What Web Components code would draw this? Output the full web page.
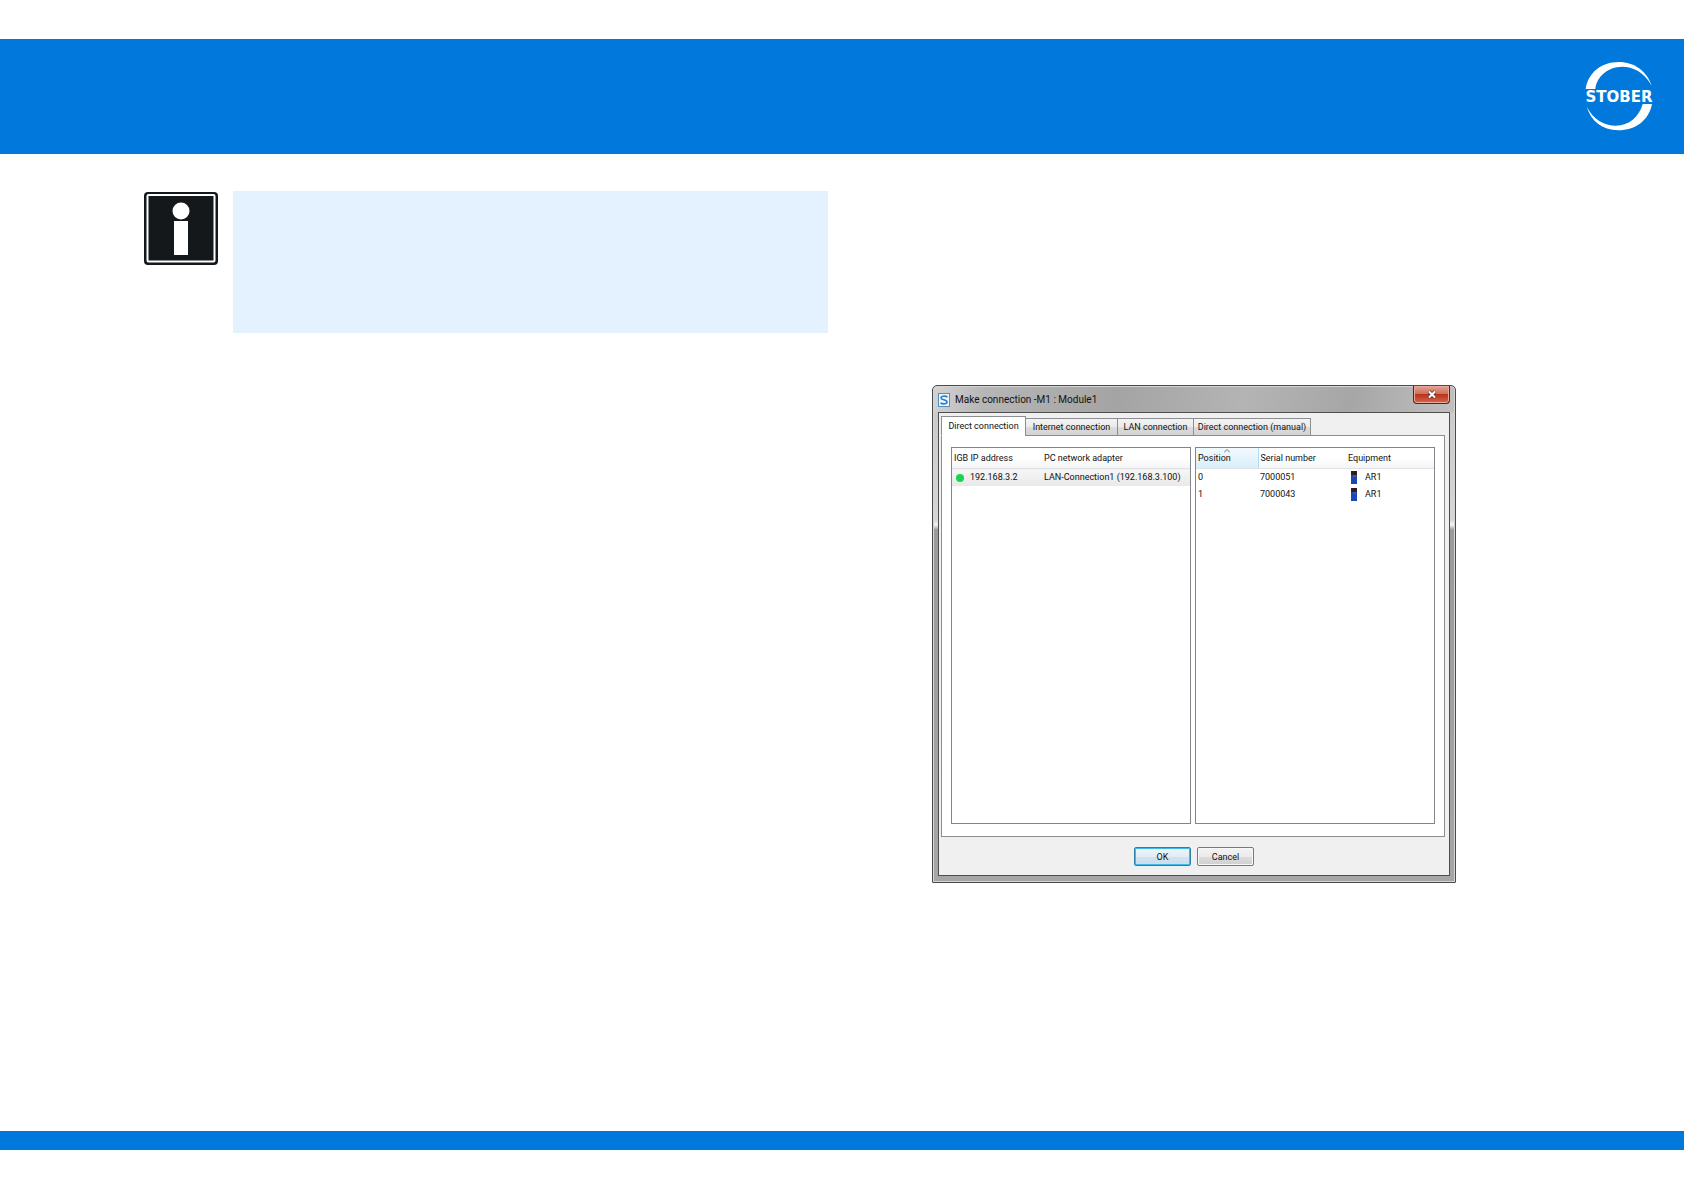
<!DOCTYPE html>
<html lang="en">
<head>
<meta charset="utf-8">
<title>Make connection</title>
<style>
body{margin:0;background:#fff;font-family:Roboto,"Liberation Sans",sans-serif}
</style>
</head>
<body>
<manual-page>
  <info-note slot="left"></info-note>
  <connection-dialog slot="right"></connection-dialog>
</manual-page>
<script>
const define=(name,html,init)=>customElements.define(name,class extends HTMLElement{
  constructor(){super();this.attachShadow({mode:'open'}).innerHTML=html;if(init)init.call(this,this.shadowRoot);}
});

define('brand-logo',`
<style>:host{display:block;width:72px;height:72px}svg{display:block}</style>
<svg width="72" height="72" viewBox="0 0 72 72" role="img" aria-label="STOBER">
  <path fill="#fff" d="M2.700 28C5 12 18 1 36 1C51 1 64 10 68.700 24.700C61 11 50 5.700 39 5.700C25 6 14 15 12.300 28Z"/>
  <path fill="#fff" d="M69 43C66 59 53 69.300 35 69.300C19 69 8 60 3.700 45.700C10 58 21 64.800 33 64.800C46 64.500 56 56 59.700 43Z"/>
  <text x="36" y="41" text-anchor="middle" font-family="DejaVu Sans" font-weight="700" font-size="15" fill="#fff">STOBER</text>
</svg>`);

define('info-note',`
<style>
:host{display:flex;gap:15px;align-items:flex-start}
svg{display:block;flex:none;margin-top:1px}
.box{flex:1;height:142px;background:#e4f1ff}
</style>
<svg width="74" height="74" viewBox="0 0 74 74" role="img" aria-label="Information">
  <rect width="74" height="73" rx="4" fill="#15181a"/>
  <rect x="3.500" y="3" width="67" height="66.500" rx="1" fill="none" stroke="#fff" stroke-width="2"/>
  <circle cx="37" cy="19" r="8.500" fill="#fff"/>
  <rect x="30" y="29" width="14" height="34" fill="#fff"/>
</svg>
<div class="box"></div>`);

define('title-bar',`
<style>
:host{display:flex;height:26px;align-items:flex-start;color:#111;font-size:10px}
svg{display:block}
.icon{margin:7px 5px 0 0}
.title{flex:1;line-height:28px;white-space:nowrap}
button{width:37px;height:18px;margin:0;padding:0;display:grid;place-items:center;border:1px solid #5c2019;border-top:0;border-radius:0 0 4px 4px;
background:linear-gradient(#e3a397,#d1705c 45%,#b8341c 50%,#d4674a);box-shadow:inset 0 0 0 1px #e9a99b}
</style>
<svg class="icon" width="12" height="14" viewBox="0 0 12 14"><rect x=".5" y=".5" width="11" height="13" fill="#eef6fc" stroke="#4d8fc4"/><path d="M9.500 4C7 2.500 3 3 3 5C3 7 9 6.500 9 9C9 11 5 11.500 2.500 10" fill="none" stroke="#2c7fc4" stroke-width="1.600"/></svg>
<span class="title"><slot></slot></span>
<button type="button" aria-label="Close"><svg width="10" height="9" viewBox="0 0 10 9"><path d="M2 1.500L8 7.500M8 1.500L2 7.500" stroke="#5b3430" stroke-width="3.600"/><path d="M2 1.500L8 7.500M8 1.500L2 7.500" stroke="#fff" stroke-width="2"/></svg></button>`);

define('tab-strip',`
<style>
:host{display:flex;align-items:flex-end;height:20px;position:relative;z-index:1;margin-bottom:-1px}
button{font:inherit;font-size:9px;color:#111;height:18px;margin:0 0 0 -1px;padding:0;border:1px solid #8b8d91;background:linear-gradient(#f3f3f3,#ebebeb 50%,#dcdcdc 51%,#d3d3d3);white-space:nowrap}
button[aria-selected=true]{height:20px;margin:0;background:#fff;border-bottom-color:#fff}
</style>
<div role="tablist" style="display:contents">
<button role="tab" aria-selected="true" style="width:85px">Direct connection</button>
<button role="tab" aria-selected="false" style="width:93px">Internet connection</button>
<button role="tab" aria-selected="false" style="width:77px">LAN connection</button>
<button role="tab" aria-selected="false" style="width:118px">Direct connection (manual)</button>
</div>`);

const listStyle=`
:host{display:block;flex:1;border:1px solid #82858c;background:#fff;color:#111;font-size:9px}
table{width:100%;border-collapse:collapse;table-layout:fixed}
th,td{padding:0 0 0 2px;text-align:left;font-weight:400;white-space:nowrap}
th{height:20px;background:linear-gradient(#fff 50%,#f4f5f6);border-bottom:1px solid #e0e2e5}
td{height:17px;line-height:17px}
svg{display:block}
.cell{display:flex;align-items:center}
`;
define('adapter-list',`
<style>${listStyle}
tbody td{background:linear-gradient(#f6f6f6,#e8e8e8)}
.cell{gap:6px;padding-left:2px}
</style>
<table><colgroup><col style="width:90px"><col></colgroup>
<thead><tr><th>IGB IP address</th><th>PC network adapter</th></tr></thead>
<tbody><tr><td><div class="cell"><svg width="8" height="8"><circle cx="4" cy="4" r="4" fill="#18d552"/></svg>192.168.3.2</div></td><td>LAN-Connection1 (192.168.3.100)</td></tr></tbody></table>`);

define('device-list',`
<style>${listStyle}
th.sorted{position:relative;background:linear-gradient(#f3fafe,#d8eefa);border-right:1px solid #b4dcf0}
.arrow{position:absolute;top:1px;left:28px}
.cell{gap:8px;padding-left:3px}
</style>
<table><colgroup><col style="width:62px"><col style="width:88px"><col></colgroup>
<thead><tr><th class="sorted" aria-sort="ascending">Position<svg class="arrow" width="6" height="4"><path d="M0 3.500L3 .5L6 3.500" fill="none" stroke="#777"/></svg></th><th>Serial number</th><th>Equipment</th></tr></thead>
<tbody></tbody></table>`,function(root){
  const device='<svg width="6" height="13"><rect width="6" height="13" fill="#1749b4"/><rect width="6" height="4" fill="#222"/><rect x="2" y="4" width="3" height="2" fill="#8b3a78"/></svg>';
  root.querySelector('tbody').innerHTML=[[0,7000051],[1,7000043]].map(r=>`<tr><td>${r[0]}</td><td>${r[1]}</td><td><div class="cell">${device}AR1</div></td></tr>`).join('');
});

define('dialog-button',`
<style>
:host{display:block}
button{display:block;font:inherit;font-size:9px;color:#111;width:57px;height:19px;padding:0;border:1px solid #77797c;border-radius:2px;background:linear-gradient(#f3f3f3,#ebebeb 50%,#dcdcdc 51%,#d0d0d0);box-shadow:inset 0 0 0 1px #f8f8f8}
:host([primary]) button{border-color:#2f7fa8;background:linear-gradient(#f0f5f9,#e2edf4 50%,#d0e2ee 51%,#c8dfee);box-shadow:inset 0 0 0 1px #3dbbe8}
</style>
<button type="button"><slot></slot></button>`);

define('connection-dialog',`
<style>
:host{display:flex;flex-direction:column;box-sizing:border-box;padding:0 5px 6px;border:1px solid #4a4a4a;border-radius:5px 5px 1px 1px;
background:linear-gradient(100deg,#d4d4d4,#b6b6b6 10%,#a4a4a4 35%,#b4b4b4 60%,#a6a6a6 80%,#c0c0c0) top/100% 26px no-repeat,linear-gradient(#c8c8c8,#d6d6d6 27%,#f4f4f4 28%,#9a9a9a 29%,#a6a6a6);box-shadow:inset 0 0 0 1px #d5d5d5}
.client{border:1px solid #4e4e4e;background:#f0f0f0;padding:3px 4px 9px 2px}
.panel{display:flex;gap:4px;height:377px;padding:11px 9px 12px;border:1px solid #8b8d91;background:#fff}
.actions{display:flex;justify-content:center;gap:6px;padding:10px 0 0 2px}
</style>
<title-bar>Make connection -M1 : Module1</title-bar>
<div class="client">
<tab-strip></tab-strip>
<div class="panel"><adapter-list></adapter-list><device-list></device-list></div>
<div class="actions"><dialog-button primary>OK</dialog-button><dialog-button>Cancel</dialog-button></div>
</div>`);

define('manual-page',`
<style>
:host{display:flex;flex-direction:column;box-sizing:border-box;min-height:100vh;padding:39px 0 40px}
header{display:flex;justify-content:flex-end;height:115px;box-sizing:border-box;padding:22px 29px 0 0;background:#0078dc}
main{flex:1;display:grid;grid-template-columns:144fr 684fr 104fr 524fr 228fr;align-items:start}
.left{grid-column:2;padding-top:37px}
.right{grid-column:4;padding-top:231px}
footer{height:19px;background:#0078dc}
</style>
<header><brand-logo></brand-logo></header>
<main><div class="left"><slot name="left"></slot></div><div class="right"><slot name="right"></slot></div></main>
<footer></footer>`);
</script>
</body>
</html>
